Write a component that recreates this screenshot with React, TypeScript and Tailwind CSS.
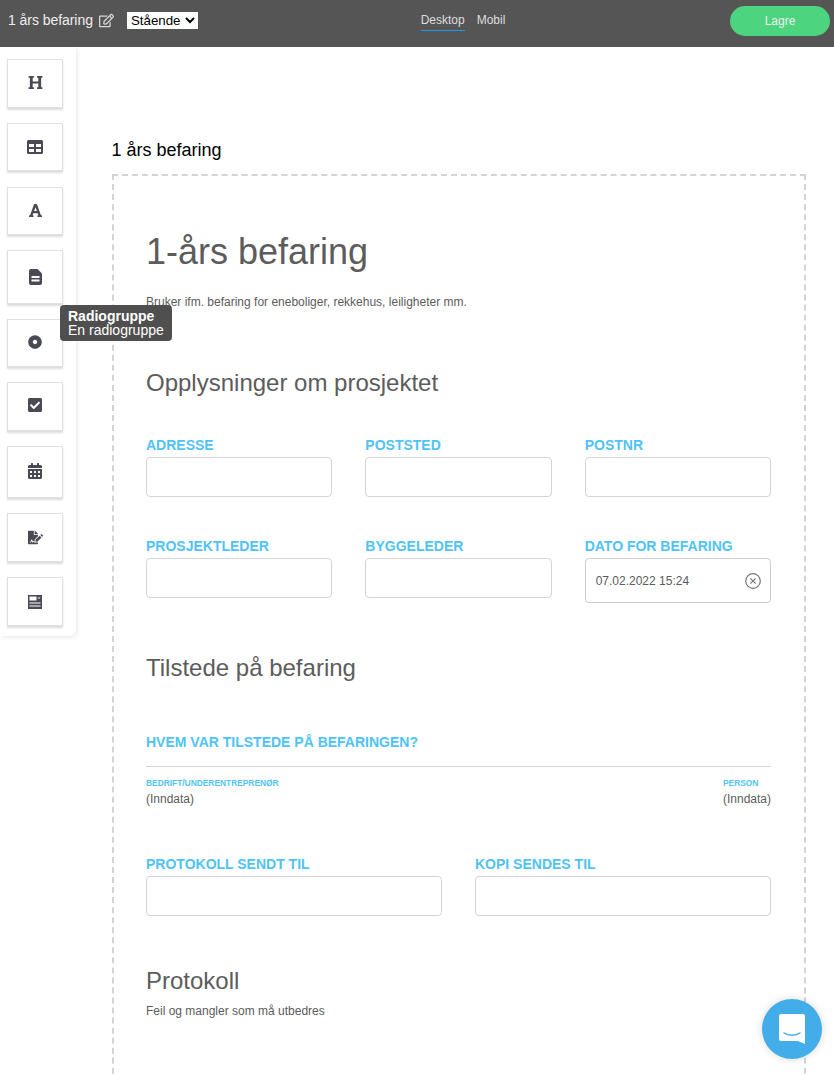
import { FaCalendarAlt, FaCheckSquare, FaDotCircle, FaFileSignature, FaFont, FaHeading, FaRegEdit, FaTable } from "react-icons/fa";

const DocIcon = () => (
  <svg width="13" height="16" viewBox="0 0 13 16" fill="#4a4a55" className="-mt-[1px]">
    <path d="M2 0h6.5L13 4.5V14a2 2 0 0 1-2 2H2a2 2 0 0 1-2-2V2a2 2 0 0 1 2-2z" />
    <path d="M2.5 7h8v2h-8zM2.5 10.5h8v2h-8z" fill="#fff" />
  </svg>
);

const FormIcon = () => (
  <svg width="16" height="16" viewBox="0 0 16 16" fill="#4a4a55">
    <path d="M1 1h14v14H1z" />
    <path d="M2.5 2.5h7v4h-7zM10.5 3.5h3l-1.5 1.5zM2.5 8.5h11v1h-11zM2.5 11.5h11v1h-11z" fill="#fff" />
  </svg>
);

const tools = [
  { icon: <FaHeading size={15} className="-mt-[2px]" />, cls: "h-[49px]" },
  { icon: <FaTable size={16} />, cls: "h-[48px] mt-[15px]" },
  { icon: <FaFont size={15} className="-mt-[2px]" />, cls: "h-[48px] mt-[16px]" },
  { icon: <DocIcon />, cls: "h-[54px] mt-[15px]" },
  { icon: <FaDotCircle size={14} className="-ml-[1px] -mt-[3px]" />, cls: "h-[48px] mt-[15px]" },
  { icon: <FaCheckSquare size={16} className="-mt-[3px]" />, cls: "h-[49px] mt-[15px]" },
  { icon: <FaCalendarAlt size={16} className="-mt-[3px]" />, cls: "h-[52px] mt-[15px]" },
  { icon: <FaFileSignature size={15} />, cls: "h-[49px] mt-[15px]" },
  { icon: <FormIcon />, cls: "h-[49px] mt-[15px]" },
];

const Field = ({ label, value }: { label: string; value?: string }) => (
  <div>
    <div className="text-[14px] leading-[16px] font-bold text-[#4fc3f7] mb-[4px]">{label}</div>
    {value ? (
      <div className="h-[45px] border border-[#ccc] rounded-[4px] flex items-center justify-between pl-[10px] pr-[9px] text-[12px] text-[#5c5c5c]">
        <span>{value}</span>
        <svg width="16" height="16" viewBox="0 0 16 16" fill="none" stroke="#777" strokeWidth="1.2">
          <circle cx="8" cy="8" r="7.3" />
          <path d="M5.4 5.4l5.2 5.2M10.6 5.4l-5.2 5.2" />
        </svg>
      </div>
    ) : (
      <div className="h-[40px] border border-[#d4d4d4] rounded-[4px]" />
    )}
  </div>
);

export default function App() {
  return (
    <div className="relative w-[834px] h-[1076px] overflow-hidden bg-white font-['Liberation_Sans',Arial,sans-serif]">
      <header className="h-[47px] bg-[#555] flex items-center justify-between pl-[8px] pr-[4px] pb-[6px] text-white">
        <div className="flex items-center w-[320px]">
          <span className="text-[14px] text-[#eee] tracking-[-0.05px]">1 års befaring</span>
          <FaRegEdit size={15} className="ml-[6px] text-[#d8d8d8]" />
          <select className="ml-[13px] h-[17px] w-[71px] bg-white text-black text-[13.3px] leading-none">
            <option>Stående</option>
          </select>
        </div>
        <div className="flex items-center gap-[12px] text-[12px] text-[#ddd] -ml-[132px]">
          <span className="border-b border-[#1e9bf0] pb-[1px]">Desktop</span>
          <span className="pb-[2px]">Mobil</span>
        </div>
        <button className="w-[100px] h-[30px] rounded-full bg-[#4cd47e] text-[12px] text-[#eee]">Lagre</button>
      </header>

      <div className="flex items-start">
        <aside className="w-[76px] h-[589px] shrink-0 pl-[7px] pt-[12px] rounded-br-[6px] shadow-[1px_1px_4px_rgba(0,0,0,0.1)]">
          {tools.map((tool, i) => (
            <div
              key={i}
              className={`w-[56px] flex items-center justify-center border border-[#e0e0e0] text-[#4a4a55] shadow-[0_2px_2px_rgba(0,0,0,0.14)] ${tool.cls}`}
            >
              {tool.icon}
            </div>
          ))}
        </aside>

        <main className="flex-1 pl-[36px] pr-[28px] pt-[93px]">
          <h2 className="text-[18px] leading-[21px] text-black -ml-[0.5px]">1 års befaring</h2>
          <div className="mt-[13px] h-[940px] border-2 border-dashed border-[#d4d4d4] pl-[32px] pr-[33px] pt-[55px] text-[#5c5c5c]">
            <h1 className="text-[36px] leading-[41px]">1-års befaring</h1>
            <p className="mt-[23px] text-[12px] leading-[14px]">Bruker ifm. befaring for eneboliger, rekkehus, leiligheter mm.</p>
            <h3 className="mt-[60px] text-[24px] leading-[28px]">Opplysninger om prosjektet</h3>

            <div className="mt-[40px] grid grid-cols-3 gap-x-[33px]">
              <Field label="ADRESSE" />
              <Field label="POSTSTED" />
              <Field label="POSTNR" />
            </div>
            <div className="mt-[41px] grid grid-cols-3 gap-x-[33px] items-start">
              <Field label="PROSJEKTLEDER" />
              <Field label="BYGGELEDER" />
              <Field label="DATO FOR BEFARING" value="07.02.2022 15:24" />
            </div>

            <h3 className="mt-[51px] text-[24px] leading-[28px]">Tilstede på befaring</h3>
            <div className="mt-[52px] text-[14px] leading-[16px] font-bold text-[#4fc3f7]">HVEM VAR TILSTEDE PÅ BEFARINGEN?</div>
            <div className="mt-[16px] border-t border-[#d4d4d4] pt-[12px] flex justify-between">
              <div>
                <div className="text-[8.4px] leading-[9px] font-bold text-[#4fc3f7]">BEDRIFT/UNDERENTREPRENØR</div>
                <div className="mt-[4px] text-[12px] leading-[14px]">(Inndata)</div>
              </div>
              <div>
                <div className="text-[8.4px] leading-[9px] font-bold text-[#4fc3f7]">PERSON</div>
                <div className="mt-[4px] text-[12px] leading-[14px]">(Inndata)</div>
              </div>
            </div>

            <div className="mt-[50px] grid grid-cols-2 gap-x-[33px]">
              <Field label="PROTOKOLL SENDT TIL" />
              <Field label="KOPI SENDES TIL" />
            </div>

            <h3 className="mt-[51px] text-[24px] leading-[28px]">Protokoll</h3>
            <p className="mt-[9px] text-[12px] leading-[14px]">Feil og mangler som må utbedres</p>
          </div>
        </main>
      </div>

      <div className="absolute left-[60px] top-[305px] w-[112px] h-[36px] rounded-[4px] bg-[#4f4f4f] text-white text-[14px] leading-[14px] px-[8px] pt-[4px]">
        <div className="font-bold">Radiogruppe</div>
        <div>En radiogruppe</div>
      </div>

      <div className="absolute left-[762px] top-[999px] w-[60px] h-[60px] rounded-full bg-[#42ade8] shadow-[0_0_8px_rgba(0,0,0,0.15)] flex items-center justify-center">
        <svg width="28" height="32" viewBox="0 0 28 32">
          <path d="M3 1h22a2 2 0 0 1 2 2v28l-7-3H3a2 2 0 0 1-2-2V3a2 2 0 0 1 2-2z" fill="#fff" />
          <path d="M6 20c4 3 12 3 16 0" fill="none" stroke="#42ade8" strokeWidth="1.5" strokeLinecap="round" />
        </svg>
      </div>
    </div>
  );
}
